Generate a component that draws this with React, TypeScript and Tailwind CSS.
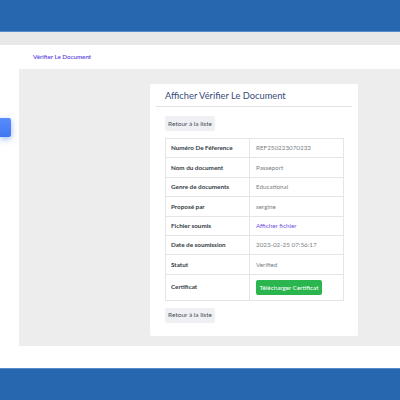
import React from 'react';

type Row = { label: string; value: string; kind?: 'link' | 'button' };

const rows: Row[] = [
  { label: 'Numéro De Féference', value: 'REF250223070233' },
  { label: 'Nom du document', value: 'Passeport' },
  { label: 'Genre de documents', value: 'Educational' },
  { label: 'Proposé par', value: 'sergine' },
  { label: 'Fichier soumis', value: 'Afficher fichier', kind: 'link' },
  { label: 'Date de soumission', value: '2023-02-25 07:56:17' },
  { label: 'Statut', value: 'Verified' },
  { label: 'Certificat', value: 'Télécharger Certificat', kind: 'button' },
];

const BackButton = () => (
  <button className="h-[15px] w-[50px] rounded-[2px] bg-[#eef0f3] text-[6.5px] text-[#4a4f57] flex items-center justify-center">
    Retour à la liste
  </button>
);

export default function App() {
  return (
    <div className="w-[400px] h-[400px] overflow-hidden bg-white flex flex-col font-['Lato','Open_Sans',sans-serif]">
      {/* top bar */}
      <div className="h-[32px] bg-[#2667b0] border-b border-[#5a8bc6]" />
      <div className="h-[13px] bg-[#e8e8e8]" />

      {/* breadcrumb */}
      <div className="h-[24px] bg-white flex items-center pl-[33px] shadow-[0_1px_2px_rgba(0,0,0,0.05)]">
        <span className="text-[6.2px] font-semibold text-[#5b45e0]">Vérifier Le Document</span>
      </div>

      <div className="flex h-[277px]">
        {/* sidebar */}
        <div className="w-[19px] bg-white pt-[49px]">
          <div className="w-[11px] h-[19px] rounded-r-[2px] bg-gradient-to-b from-[#5a8cff] to-[#3f76f0] shadow-[0_2px_6px_rgba(63,118,240,0.5)]" />
        </div>

        {/* content */}
        <div className="flex-1 bg-[#ededed] pl-[131px] pt-[15px]">
          <div className="w-[208px] h-[252px] bg-white rounded-[2px] flex flex-col">
            <div className="mx-[6px] h-[23px] border-b border-[#e3e3e3] flex items-center pl-[9px] pt-[1px]">
              <h1 className="text-[9.3px] text-[#374b7a]">Afficher Vérifier Le Document</h1>
            </div>

            <div className="px-[15px] pt-[9px] flex flex-col gap-[7px]">
              <BackButton />

              <table className="w-[179px] border-collapse text-[6.3px]">
                <tbody>
                  {rows.map((r) => (
                    <tr key={r.label}>
                      <td
                        className={`w-[84px] border border-[#e2e5e9] pl-[5px] font-bold text-[#333a44] ${
                          r.kind === 'button' ? 'h-[26px] align-top pt-[7px]' : 'h-[19.4px]'
                        }`}
                      >
                        {r.label}
                      </td>
                      <td className="border border-[#e2e5e9] pl-[6px] text-[#7a7f86]">
                        {r.kind === 'button' ? (
                          <span className="inline-flex h-[15px] w-[66px] items-center justify-center rounded-[2px] bg-[#2bb54f] text-white">
                            {r.value}
                          </span>
                        ) : r.kind === 'link' ? (
                          <span className="text-[#7352e6]">{r.value}</span>
                        ) : (
                          r.value
                        )}
                      </td>
                    </tr>
                  ))}
                </tbody>
              </table>

              <BackButton />
            </div>
          </div>
        </div>
      </div>

      <div className="h-[22px] bg-white" />
      <div className="flex-1 bg-[#2667b0] border-t border-[#5a8bc6]" />
    </div>
  );
}
